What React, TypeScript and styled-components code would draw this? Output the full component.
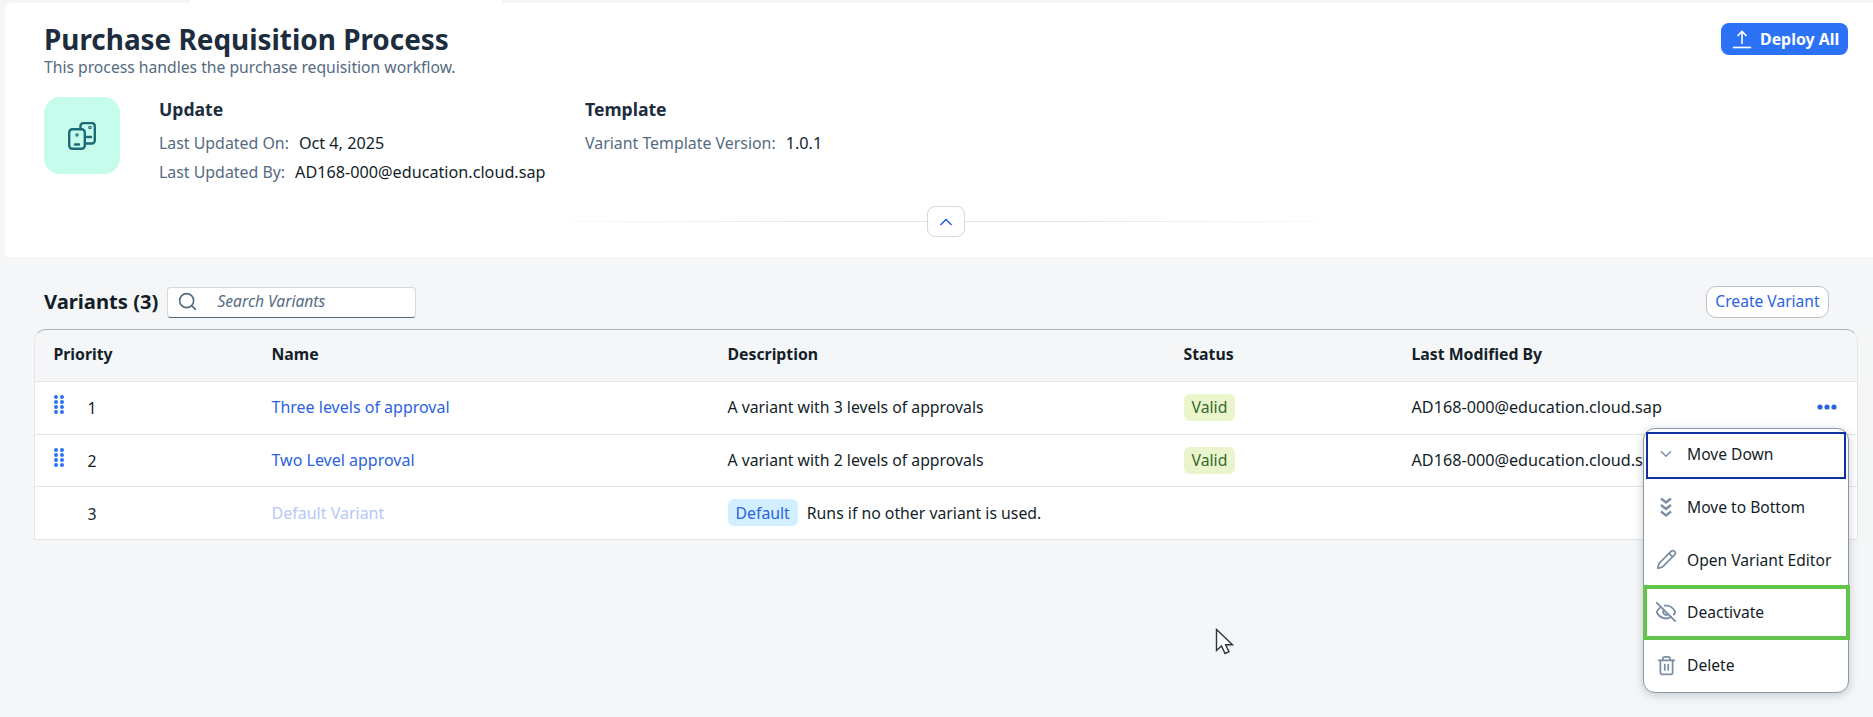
import React from "react";
import styled, { createGlobalStyle } from "styled-components";
import { ChevronDown, ChevronUp, EyeOff, Pencil, Search, Trash2 } from "lucide-react";

const FONT = `"Noto Sans", "Liberation Sans", sans-serif`;

const GlobalStyle = createGlobalStyle`
  html, body {
    margin: 0;
    padding: 0;
    height: 100%;
    background: #f5f6f7;
    font-family: ${FONT};
    color: #1d2d3e;
    overflow: hidden;
  }
`;

const Page = styled.div`
  position: relative;
  width: 1873px;
  height: 717px;
  padding: 3px 0 0 5px;
  box-sizing: border-box;
  overflow: hidden;
`;

const TopTab = styled.div`
  position: absolute;
  top: 0;
  left: 190px;
  width: 312px;
  height: 4px;
  background: #fff;
`;

const Header = styled.header`
  height: 254px;
  padding: 20px 25px 0 39px;
  box-sizing: border-box;
  background: #fff;
  border-top-left-radius: 8px;
  display: flex;
  flex-direction: column;
`;

const TitleRow = styled.div`
  display: flex;
  justify-content: space-between;
  align-items: flex-start;
`;

const Title = styled.h1`
  margin: 0;
  font-size: 27.9px;
  line-height: 33px;
  font-weight: 700;
  color: #1d2d3e;
`;

const Subtitle = styled.p`
  margin: 1px 0 0;
  font-size: 15.7px;
  line-height: 20px;
  color: #556b82;
`;

const DeployButton = styled.button`
  display: flex;
  align-items: center;
  gap: 8px;
  width: 127px;
  height: 32px;
  padding: 0 0 0 11px;
  border: none;
  border-radius: 8px;
  background: #2b72f6;
  color: #fff;
  font: 700 15.9px ${FONT};
  white-space: nowrap;
`;

const Info = styled.div`
  display: flex;
  margin-top: 20px;
`;

const Tile = styled.div`
  width: 76px;
  height: 77px;
  margin-right: 39px;
  border-radius: 16px;
  background: #c6fceb;
  display: flex;
  align-items: center;
  justify-content: center;
`;

const InfoGroup = styled.div<{ $width: number }>`
  width: ${(p) => p.$width}px;
  display: flex;
  flex-direction: column;
`;

const GroupTitle = styled.h2`
  margin: 0 0 7px;
  font-size: 17.6px;
  line-height: 24px;
  font-weight: 700;
`;

const InfoRow = styled.div`
  display: flex;
  align-items: center;
  height: 29px;
  font-size: 15.9px;
`;

const InfoLabel = styled.span`
  color: #556b82;
  margin-right: 10px;
`;

const InfoValue = styled.span`
  color: #131e29;
  font-size: 16.2px;
`;

const DividerRow = styled.div`
  display: flex;
  align-items: center;
  justify-content: center;
  margin: 20px 0 0 485px;
  width: 833px;
  height: 31px;
  background: linear-gradient(90deg, #fff 0%, #e2e5e8 35%, #e2e5e8 65%, #fff 100%) center / 100% 1px no-repeat;
`;

const CollapseButton = styled.button`
  width: 38px;
  height: 31px;
  padding: 0;
  border: 1px solid #d5dadf;
  border-radius: 8px;
  background: #fff;
  color: #2b63e0;
  display: flex;
  align-items: center;
  justify-content: center;
`;

const Content = styled.main`
  padding: 29px 15px 0 29px;
`;

const Toolbar = styled.div`
  display: flex;
  align-items: center;
  height: 32px;
  padding: 0 29px 0 10px;
`;

const SectionTitle = styled.h2`
  margin: 0 9px 2px 0;
  font-size: 20.2px;
  font-weight: 700;
  color: #131e29;
`;

const SearchBox = styled.div`
  width: 249px;
  height: 31px;
  box-sizing: border-box;
  padding: 0 9px 2px;
  display: flex;
  align-items: center;
  gap: 19px;
  background: #fff;
  border: 1px solid #d5dadf;
  border-bottom: 1.5px solid #556b82;
  border-radius: 4px;
  color: #556b82;
  font-size: 15.6px;
  font-style: italic;
`;

const CreateButton = styled.button`
  margin-left: auto;
  height: 32px;
  width: 123px;
  padding: 0 0 2px;
  border: 1px solid #bcc3ca;
  border-radius: 10px;
  background: #fff;
  color: #2b63e0;
  font: 15.6px ${FONT};
`;

const Table = styled.div`
  margin-top: 11px;
  border-top: 1px solid #a9b4be;
  border-left: 1px solid #e5e5e5;
  border-right: 1px solid #e5e5e5;
  border-radius: 12px 12px 0 0;
`;

const Row = styled.div<{ $head?: boolean }>`
  display: grid;
  grid-template-columns: 218px 456px 456px 228px 1fr;
  align-items: center;
  height: ${(p) => (p.$head ? "52px" : "52.7px")};
  box-sizing: border-box;
  padding: ${(p) => (p.$head ? "0 0 3px 18.5px" : "0 0 1px 18.5px")};
  border-bottom: 1px solid #e5e5e5;
  background: ${(p) => (p.$head ? "transparent" : "#fff")};
  font-size: 15.8px;
  color: #131e29;
`;

const HeadCell = styled.div`
  font-weight: 700;
`;

const PriorityCell = styled.div`
  display: flex;
  align-items: center;
  height: 100%;
`;

const Handle = styled.div`
  width: 34px;
  align-self: flex-start;
  margin-top: 13px;
`;

const Number = styled.span`
  padding-top: 2px;
`;

const NameLink = styled.a<{ $disabled?: boolean }>`
  font-size: 16px;
  color: ${(p) => (p.$disabled ? "#b4caf5" : "#2b63e0")};
`;

const Tag = styled.span<{ $kind: "valid" | "default" }>`
  display: inline-flex;
  align-items: center;
  height: 27px;
  padding: 0 8px;
  border-radius: 6px;
  background: ${(p) => (p.$kind === "valid" ? "#ebf5cb" : "#d1efff")};
  color: ${(p) => (p.$kind === "valid" ? "#36682f" : "#2b63e0")};
`;

const DescCell = styled.div`
  display: flex;
  align-items: center;
  gap: 9px;
`;

const LastCell = styled.div`
  display: flex;
  align-items: center;
  white-space: nowrap;
  font-size: 16.2px;
`;

const MoreDots = styled.svg`
  position: absolute;
  left: 1817px;
  top: 404px;
`;

const Menu = styled.div`
  position: absolute;
  left: 1643px;
  top: 428px;
  width: 206px;
  height: 265px;
  box-sizing: border-box;
  display: flex;
  flex-direction: column;
  background: #fff;
  border: 1px solid #8a97a5;
  border-radius: 12px;
  box-shadow: 0 2px 10px rgba(60, 75, 95, 0.28);
`;

const MenuItem = styled.div<{ $focus?: boolean; $mark?: boolean }>`
  position: relative;
  height: 52.7px;
  flex: none;
  display: flex;
  align-items: center;
  gap: 9px;
  padding-left: 10px;
  margin-top: ${(p) => (p.$focus ? "-1px" : "0")};
  color: #131e29;
  font-size: 15.6px;

  &::after {
    content: "";
    display: ${(p) => (p.$focus || p.$mark ? "block" : "none")};
    position: absolute;
    box-sizing: border-box;
    left: ${(p) => (p.$mark ? "-1px" : "2px")};
    right: ${(p) => (p.$mark ? "-2px" : "2px")};
    top: ${(p) => (p.$mark ? "-1px" : "4px")};
    bottom: ${(p) => (p.$mark ? "-1px" : "2px")};
    border: ${(p) => (p.$mark ? "4px solid #62c44a" : "2px solid #12309d")};
  }
`;

const MenuIcon = styled.span`
  width: 24px;
  display: flex;
  align-items: center;
  justify-content: center;
  color: #7b8ea4;
`;

const Cursor = styled.svg`
  position: absolute;
  left: 1215px;
  top: 628px;
`;

const UploadIcon = () => (
  <svg width="20" height="20" viewBox="0 0 20 20" fill="none" stroke="#fff" strokeWidth="1.6">
    <path d="M10 15V2.5M5.5 7 10 2.5 14.5 7" />
    <path d="M.8 18.5h18.4" />
  </svg>
);

const PhonesIcon = () => (
  <svg width="28" height="28" viewBox="0 0 28 28" fill="none" stroke="#1c6a75" strokeWidth="2.4" strokeLinecap="round">
    <rect x="1.2" y="7.2" width="15.6" height="19.6" rx="3.2" />
    <path d="M12.5 7V4a3 3 0 0 1 3-3h8.3a3 3 0 0 1 3 3v14.5a3 3 0 0 1-3 3h-6.8" />
    <path d="M7 22.5h4M19 15h4" />
    <circle cx="9" cy="13" r=".6" />
    <circle cx="22" cy="5.5" r=".6" />
  </svg>
);

const BottomIcon = () => (
  <svg width="14" height="22" viewBox="0 0 14 22" fill="none" stroke="#7b8ea4" strokeWidth="2.4">
    <path d="M2 2.5l5 4 5-4M2 9l5 4 5-4M2 15.5l5 4 5-4" />
  </svg>
);

const HandleIcon = () => (
  <svg width="10" height="19" viewBox="0 0 10 19" fill="#2b72f6">
    {[2, 7, 12, 17].map((y) => (
      <React.Fragment key={y}>
        <circle cx="2" cy={y} r="2" />
        <circle cx="8" cy={y} r="2" />
      </React.Fragment>
    ))}
  </svg>
);

const App: React.FC = () => {
  return (
    <Page>
      <GlobalStyle />
      <TopTab />
      <Header>
        <TitleRow>
          <div>
            <Title>Purchase Requisition Process</Title>
            <Subtitle>This process handles the purchase requisition workflow.</Subtitle>
          </div>
          <DeployButton>
            <UploadIcon />
            Deploy All
          </DeployButton>
        </TitleRow>
        <Info>
          <Tile>
            <PhonesIcon />
          </Tile>
          <InfoGroup $width={426}>
            <GroupTitle>Update</GroupTitle>
            <InfoRow>
              <InfoLabel>Last Updated On:</InfoLabel>
              <InfoValue>Oct 4, 2025</InfoValue>
            </InfoRow>
            <InfoRow>
              <InfoLabel>Last Updated By:</InfoLabel>
              <InfoValue>AD168-000@education.cloud.sap</InfoValue>
            </InfoRow>
          </InfoGroup>
          <InfoGroup $width={400}>
            <GroupTitle>Template</GroupTitle>
            <InfoRow>
              <InfoLabel>Variant Template Version:</InfoLabel>
              <InfoValue>1.0.1</InfoValue>
            </InfoRow>
          </InfoGroup>
        </Info>
        <DividerRow>
          <CollapseButton>
            <ChevronUp size={20} strokeWidth={2} />
          </CollapseButton>
        </DividerRow>
      </Header>
      <Content>
        <Toolbar>
          <SectionTitle>Variants (3)</SectionTitle>
          <SearchBox>
            <Search size={21} strokeWidth={1.8} />
            Search Variants
          </SearchBox>
          <CreateButton>Create Variant</CreateButton>
        </Toolbar>
        <Table>
          <Row $head>
            <HeadCell>Priority</HeadCell>
            <HeadCell>Name</HeadCell>
            <HeadCell>Description</HeadCell>
            <HeadCell>Status</HeadCell>
            <HeadCell>Last Modified By</HeadCell>
          </Row>
          <Row>
            <PriorityCell>
              <Handle>
                <HandleIcon />
              </Handle>
              <Number>1</Number>
            </PriorityCell>
            <NameLink>Three levels of approval</NameLink>
            <DescCell>A variant with 3 levels of approvals</DescCell>
            <div>
              <Tag $kind="valid">Valid</Tag>
            </div>
            <LastCell>AD168-000@education.cloud.sap</LastCell>
          </Row>
          <Row>
            <PriorityCell>
              <Handle>
                <HandleIcon />
              </Handle>
              <Number>2</Number>
            </PriorityCell>
            <NameLink>Two Level approval</NameLink>
            <DescCell>A variant with 2 levels of approvals</DescCell>
            <div>
              <Tag $kind="valid">Valid</Tag>
            </div>
            <LastCell>AD168-000@education.cloud.sap</LastCell>
          </Row>
          <Row>
            <PriorityCell>
              <Handle />
              <Number>3</Number>
            </PriorityCell>
            <NameLink $disabled>Default Variant</NameLink>
            <DescCell>
              <Tag $kind="default">Default</Tag>
              Runs if no other variant is used.
            </DescCell>
            <div />
            <div />
          </Row>
        </Table>
      </Content>
      <MoreDots width="20" height="6" viewBox="0 0 20 6" fill="#2b63e0">
        <circle cx="3" cy="3" r="2.6" />
        <circle cx="10" cy="3" r="2.6" />
        <circle cx="17" cy="3" r="2.6" />
      </MoreDots>
      <Menu>
        <MenuItem $focus>
          <MenuIcon>
            <ChevronDown size={18} strokeWidth={2} />
          </MenuIcon>
          Move Down
        </MenuItem>
        <MenuItem>
          <MenuIcon>
            <BottomIcon />
          </MenuIcon>
          Move to Bottom
        </MenuItem>
        <MenuItem>
          <MenuIcon>
            <Pencil size={21} strokeWidth={2} />
          </MenuIcon>
          Open Variant Editor
        </MenuItem>
        <MenuItem $mark>
          <MenuIcon>
            <EyeOff size={22} strokeWidth={2} />
          </MenuIcon>
          Deactivate
        </MenuItem>
        <MenuItem>
          <MenuIcon>
            <Trash2 size={21} strokeWidth={2} />
          </MenuIcon>
          Delete
        </MenuItem>
      </Menu>
      <Cursor width="20" height="28" viewBox="0 0 20 28">
        <path d="M1.5 1.5v21l5-4.5 3.5 7.5 4-1.8-3.4-7h6.9z" fill="#fff" stroke="#2b3442" strokeWidth="1.4" />
      </Cursor>
    </Page>
  );
};

export default App;
